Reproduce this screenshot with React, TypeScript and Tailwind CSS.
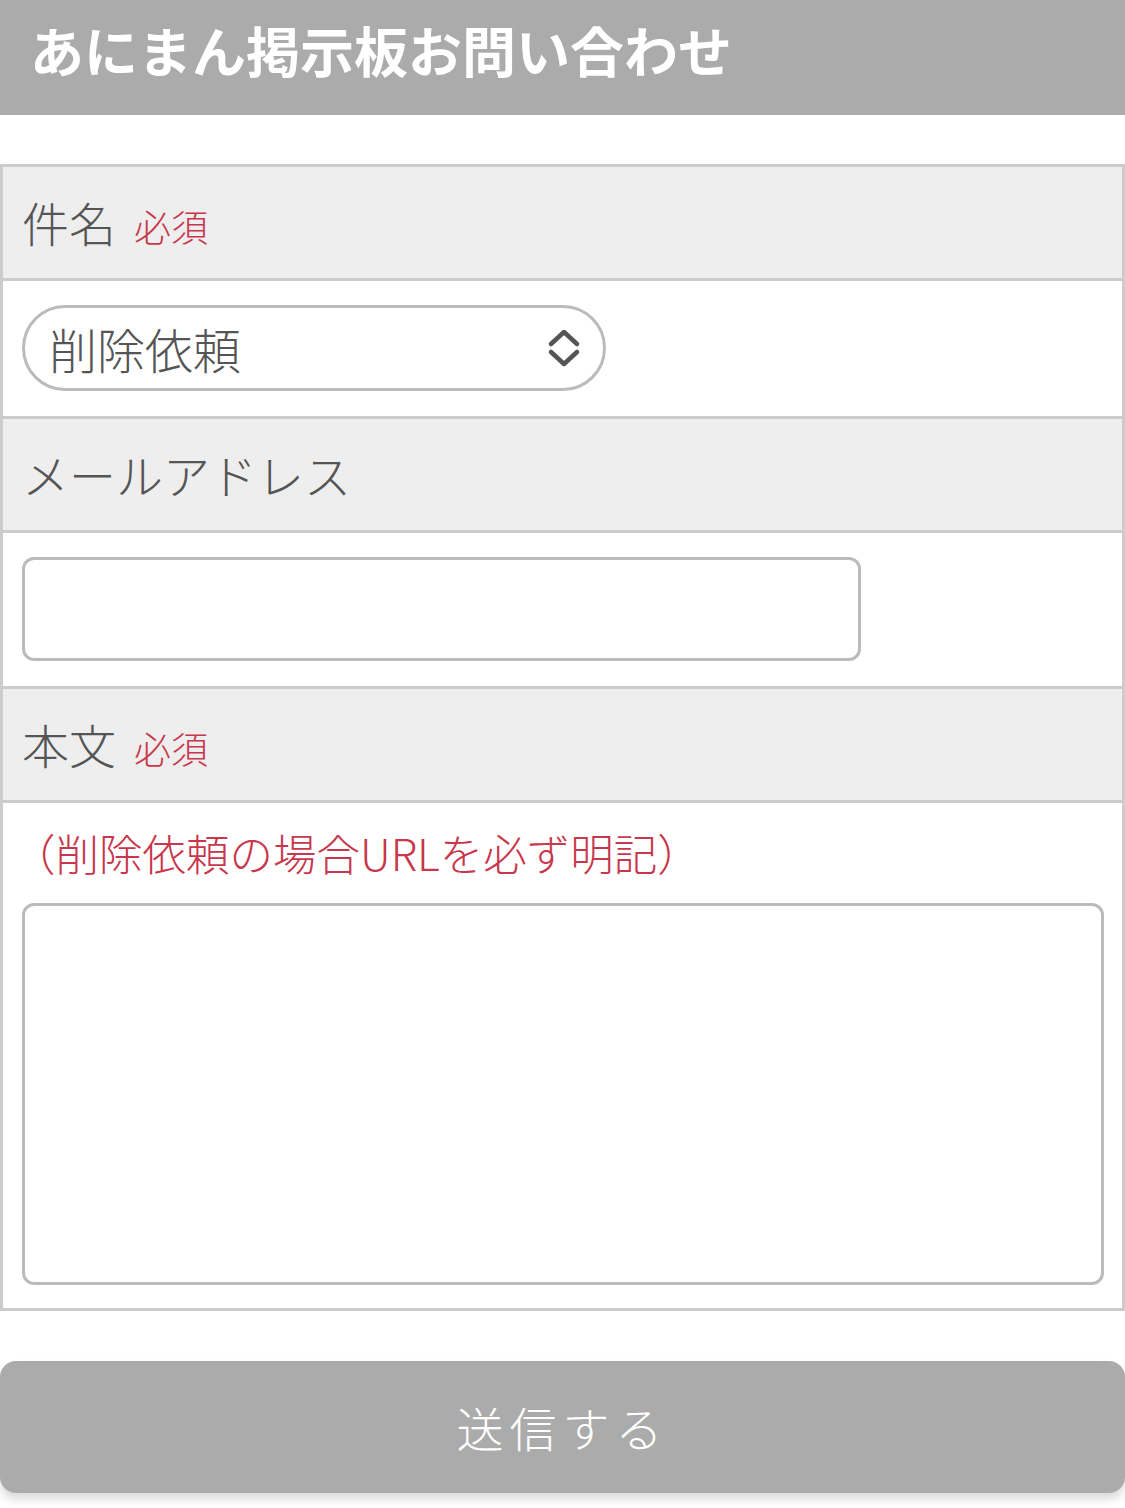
import React from "react";

function Required() {
    return <span className="ml-[18px] text-[37px] text-[#c8374b]">必須</span>;
}

function LabelRow({label, required}: {label: string; required?: boolean}) {
    return (
        <div className="flex items-baseline h-[111px] pt-[27px] px-[19px] bg-[#eeeeee] text-[47px] leading-[56px] text-[#555555]">
            <span>{label}</span>
            {required && <Required/>}
        </div>
    );
}

function ChevronUpDown() {
    return (
        <svg width="34" height="40" viewBox="0 0 34 40" fill="none" stroke="#555555" strokeWidth="4.5"
             strokeLinecap="round" strokeLinejoin="round">
            <path d="M4 16 L17 4 L30 16"/>
            <path d="M4 24 L17 36 L30 24"/>
        </svg>
    );
}

export default function App() {
    return (
        <div className="w-[1125px] min-h-[1508px] bg-white font-light font-['Noto_Sans_CJK_JP',sans-serif]">
            <header className="flex items-center h-[115px] pb-[16px] px-[30px] bg-[#ababab]">
                <h1 className="text-[54px] font-bold text-white leading-none">あにまん掲示板お問い合わせ</h1>
            </header>

            <form className="pt-[49px]">
                <section className="border-[3px] border-[#cccccc]">
                    <LabelRow label="件名" required/>
                    <div className="border-y-[3px] border-[#cccccc] h-[141px] pt-[24px] px-[19px]">
                        <div className="relative w-[584px] h-[86px]">
                            <select
                                className="appearance-none w-full h-full rounded-full border-[3px] border-[#bbbbbb] bg-white pl-[24px] text-[48px] font-light text-[#555555] outline-none">
                                <option>削除依頼</option>
                            </select>
                            <span className="absolute right-[25px] top-[23px] pointer-events-none">
                                <ChevronUpDown/>
                            </span>
                        </div>
                    </div>

                    <LabelRow label="メールアドレス"/>
                    <div className="border-y-[3px] border-[#cccccc] h-[159px] pt-[24px] px-[19px]">
                        <input type="email"
                               className="block w-[839px] h-[104px] rounded-[12px] border-[3px] border-[#bbbbbb] bg-white px-[20px] text-[40px] text-[#555555] outline-none"/>
                    </div>

                    <LabelRow label="本文" required/>
                    <div className="border-t-[3px] border-[#cccccc] px-[19px] pt-[24px] pb-[23px]">
                        <p className="-ml-[10px] text-[43.5px] leading-[52px] text-[#c8374b]">（削除依頼の場合URLを必ず明記）</p>
                        <textarea
                            className="block mt-[24px] w-[1082px] h-[382px] rounded-[12px] border-[3px] border-[#bbbbbb] bg-white p-[16px] text-[38px] text-[#555555] outline-none resize-none"/>
                    </div>
                </section>

                <div className="pt-[50px]">
                    <button type="button"
                            className="w-[1125px] h-[132px] rounded-[16px] bg-[#ababab] text-white text-[47px] font-light tracking-[6px] shadow-[0_6px_10px_rgba(0,0,0,0.15)]">
                        送信する
                    </button>
                </div>
            </form>
        </div>
    );
}
